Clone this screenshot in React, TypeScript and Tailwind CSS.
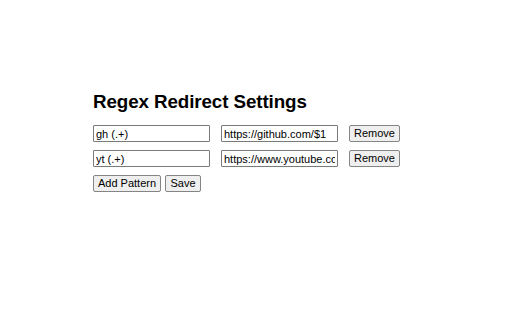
import React, { useState } from 'react';

type Rule = { pattern: string; target: string };

const initialRules: Rule[] = [
  { pattern: 'gh (.+)', target: 'https://github.com/$1' },
  { pattern: 'yt (.+)', target: 'https://www.youtube.com/results?search_query=$1' },
];

const App = () => {
  const [rules, setRules] = useState<Rule[]>(initialRules);

  const update = (i: number, key: keyof Rule, value: string) => {
    setRules(rules.map((r, idx) => (idx === i ? { ...r, [key]: value } : r)));
  };

  return (
    <div className="min-h-screen w-full bg-white pl-[93px] pt-[91px] font-['Liberation_Sans',Arial,sans-serif] text-black">
      <h1 className="text-[18.8px] leading-[22px] font-bold tracking-[-0.1px]">Regex Redirect Settings</h1>

      <div className="mt-[12px] flex flex-col gap-[8px]">
        {rules.map((rule, i) => (
          <div key={i} className="flex items-center">
            <input
              type="text"
              value={rule.pattern}
              onChange={(e) => update(i, 'pattern', e.target.value)}
              className="h-[17px] w-[117px] rounded-[1px] border border-[#7a7a7a] px-[2px] text-[11px] leading-[13px] outline-none"
            />
            <input
              type="text"
              value={rule.target}
              onChange={(e) => update(i, 'target', e.target.value)}
              className="ml-[11px] h-[17px] w-[117px] rounded-[1px] border border-[#7a7a7a] px-[2px] text-[11px] leading-[13px] outline-none"
            />
            <button
              onClick={() => setRules(rules.filter((_, idx) => idx !== i))}
              className="ml-[11px] h-[17px] w-[51px] rounded-[2px] border border-[#858585] bg-[#efefef] text-[11px] leading-[13px]"
            >
              Remove
            </button>
          </div>
        ))}
      </div>

      <div className="mt-[8px] flex gap-[4px]">
        <button
          onClick={() => setRules([...rules, { pattern: '', target: '' }])}
          className="h-[17px] w-[68px] rounded-[2px] border border-[#858585] bg-[#efefef] text-[11px] leading-[13px]"
        >
          Add Pattern
        </button>
        <button className="h-[17px] w-[36px] rounded-[2px] border border-[#858585] bg-[#efefef] text-[11px] leading-[13px]">
          Save
        </button>
      </div>
    </div>
  );
};

export default App;
